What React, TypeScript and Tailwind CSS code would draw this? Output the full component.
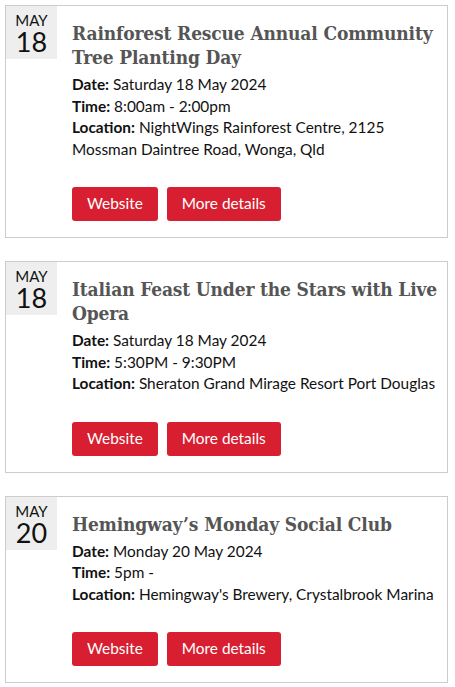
import React from "react";

type Event = {
  month: string;
  day: string;
  title: string;
  date: string;
  time: string;
  location: string;
};

const events: Event[] = [
  {
    month: "MAY",
    day: "18",
    title: "Rainforest Rescue Annual Community Tree Planting Day",
    date: "Saturday 18 May 2024",
    time: "8:00am - 2:00pm",
    location: "NightWings Rainforest Centre, 2125 Mossman Daintree Road, Wonga, Qld",
  },
  {
    month: "MAY",
    day: "18",
    title: "Italian Feast Under the Stars with Live Opera",
    date: "Saturday 18 May 2024",
    time: "5:30PM - 9:30PM",
    location: "Sheraton Grand Mirage Resort Port Douglas",
  },
  {
    month: "MAY",
    day: "20",
    title: "Hemingway\u2019s Monday Social Club",
    date: "Monday 20 May 2024",
    time: "5pm -",
    location: "Hemingway's Brewery, Crystalbrook Marina",
  },
];

function EventCard({ ev }: { ev: Event }) {
  return (
    <div className="flex border border-[#cccccc] bg-white">
      <div className="w-[51px] h-[53px] shrink-0 bg-[#eeeeee] flex flex-col items-center pt-[6px] text-[#111]">
        <span className="text-[15px] leading-[16px]">{ev.month}</span>
        <span className="text-[27px] leading-[27px]">{ev.day}</span>
      </div>
      <div className="flex-1 pl-[15px] pr-[3px] pt-[15px] pb-[16px]">
        <h3 className="text-[19px] leading-[24px] font-bold tracking-[-0.15px] text-[#555555] [font-family:'DejaVu_Serif_Condensed','DejaVu_Serif',serif]">
          {ev.title}
        </h3>
        <div className="mt-[5px] text-[15.4px] leading-[21.5px] text-[#111]">
          <p>
            <strong>Date:</strong> {ev.date}
          </p>
          <p>
            <strong>Time:</strong> {ev.time}
          </p>
          <p>
            <strong>Location:</strong> {ev.location}
          </p>
        </div>
        <div className="mt-[27px] flex gap-[9px]">
          <button className="h-[34px] px-[15px] rounded-[3px] bg-[#d71f31] text-white text-[15.4px]">
            Website
          </button>
          <button className="h-[34px] px-[15px] rounded-[3px] bg-[#d71f31] text-white text-[15.4px]">
            More details
          </button>
        </div>
      </div>
    </div>
  );
}

export default function App() {
  return (
    <div className="w-[455px] min-h-[687px] bg-white pt-[5px] pl-[5px] pr-[7px] [font-family:Lato,'Liberation_Sans',sans-serif]">
      <div className="flex flex-col gap-[23px]">
        {events.map((ev, i) => (
          <EventCard key={i} ev={ev} />
        ))}
      </div>
    </div>
  );
}
